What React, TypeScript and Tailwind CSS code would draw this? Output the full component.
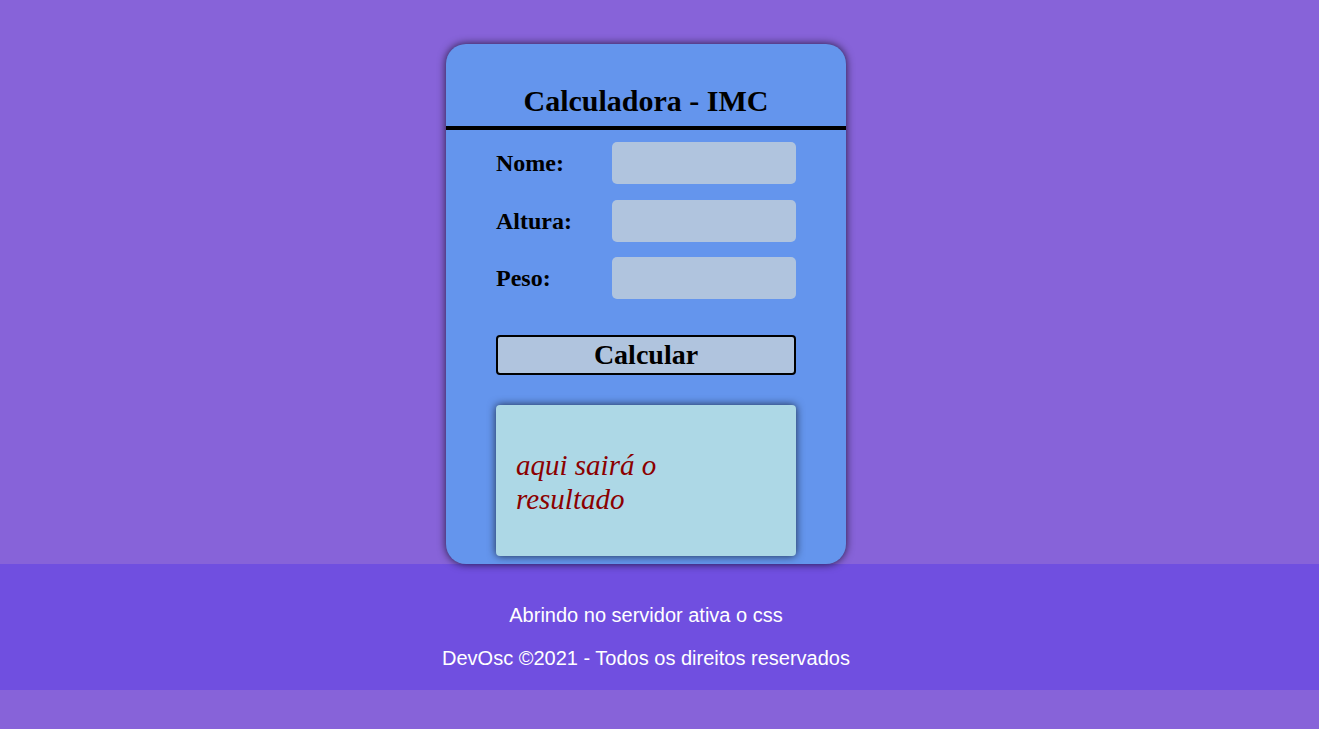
export default function App() {
  const fields = ["Nome:", "Altura:", "Peso:"];

  return (
    <div className="min-h-[729px] bg-[#8763D9] font-['Liberation_Serif',serif]">
      <main className="pt-[44px] pr-[27px] flex justify-center">
        <div className="w-[400px] h-[520px] bg-[#6495ED] rounded-[20px] shadow-[0_0_9px_rgba(0,0,0,0.75)] pt-[41px] flex flex-col">
          <h1 className="text-[30px] leading-[32px] font-bold text-center text-black">Calculadora - IMC</h1>
          <div className="mt-[9px] h-[4px] bg-black"></div>

          <div className="px-[50px] pt-[12px] flex flex-col gap-[15.5px]">
            {fields.map((label) => (
              <div key={label} className="flex items-center justify-between h-[42px]">
                <label className="text-[24px] font-bold text-black">{label}</label>
                <input className="w-[184px] h-[42px] rounded-[5px] bg-[#B0C4DE] outline-none" />
              </div>
            ))}
          </div>

          <div className="px-[50px] mt-[36px]">
            <button className="w-[300px] h-[40px] bg-[#B0C4DE] border-2 border-black rounded-[4px] text-[28px] leading-none font-bold text-black font-['Liberation_Serif',serif]">
              Calcular
            </button>
          </div>

          <div className="px-[50px] mt-[30px]">
            <div className="h-[151px] bg-[#ADD8E6] rounded-[4px] shadow-[0_0_8px_rgba(0,0,0,0.7)] px-[20px] pt-[3px] flex items-center">
              <p className="max-w-[200px] text-[29px] leading-[34px] italic text-[#8B0000]">aqui sairá o resultado</p>
            </div>
          </div>
        </div>
      </main>

      <footer className="bg-[#704FE0] pt-[40px] pb-[20px] pr-[27px] flex flex-col gap-[20px] items-center text-white text-[20px] leading-[23px] font-['Liberation_Sans',Arial,sans-serif]">
        <p>Abrindo no servidor ativa o css</p>
        <p>DevOsc ©2021 - Todos os direitos reservados</p>
      </footer>
    </div>
  );
}
